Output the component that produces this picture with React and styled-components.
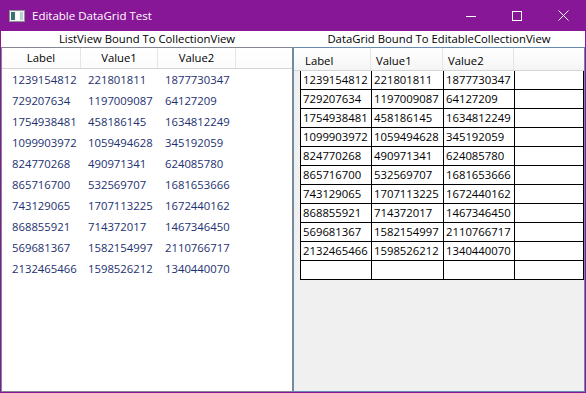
import React from "react";
import styled, { createGlobalStyle } from "styled-components";

const GlobalStyle = createGlobalStyle`
  html, body {
    margin: 0;
    padding: 0;
    background: #ffffff;
  }
  * {
    box-sizing: border-box;
  }
`;

const rows = [
  ["1239154812", "221801811", "1877730347"],
  ["729207634", "1197009087", "64127209"],
  ["1754938481", "458186145", "1634812249"],
  ["1099903972", "1059494628", "345192059"],
  ["824770268", "490971341", "624085780"],
  ["865716700", "532569707", "1681653666"],
  ["743129065", "1707113225", "1672440162"],
  ["868855921", "714372017", "1467346450"],
  ["569681367", "1582154997", "2110766717"],
  ["2132465466", "1598526212", "1340440070"]
];

const columns = ["Label", "Value1", "Value2"];

const Window = styled.div`
  width: 586px;
  height: 393px;
  background: #881798;
  display: flex;
  flex-direction: column;
  font-family: "Open Sans", "Noto Sans", sans-serif;
  font-size: 11.3px;
  color: #000;
`;

const TitleBar = styled.div`
  height: 31px;
  flex: none;
  display: flex;
  align-items: center;
  color: #ffffff;
`;

const AppIcon = styled.svg`
  margin-left: 9px;
  margin-right: 7px;
`;

const Title = styled.div`
  font-size: 11.5px;
  flex: 1;
  padding-bottom: 1px;
`;

const CaptionButton = styled.div`
  width: 46px;
  height: 31px;
  display: flex;
  align-items: center;
  justify-content: center;
`;

const Body = styled.div`
  flex: 1;
  margin: 0 1px 1px 1px;
  background: #ffffff;
  display: grid;
  grid-template-columns: 292px 292px;
`;

const Pane = styled.div`
  display: flex;
  flex-direction: column;
  min-height: 0;
`;

const Caption = styled.div`
  height: 16px;
  line-height: 16px;
  text-align: center;
  flex: none;
`;

const ListBox = styled.div`
  flex: 1;
  border: 1px solid #828790;
  background: #ffffff;
`;

const ListHeader = styled.div`
  display: grid;
  grid-template-columns: 79px 77px 78px 1fr;
  height: 21px;
  border-bottom: 1px solid #d5d5d5;
  background: linear-gradient(#ffffff, #fbfbfb);
`;

const ListHeaderCell = styled.div`
  border-right: ${(p) => (p.$filler ? "none" : "1px solid #e5e5e5")};
  display: flex;
  align-items: center;
  justify-content: center;
  padding-bottom: 1px;
`;

const ListRow = styled.div`
  display: grid;
  grid-template-columns: 79px 77px 78px 1fr;
  height: 21px;
  align-items: center;
  color: #1d3070;
`;

const ListCell = styled.div`
  padding-left: 7px;
  &:first-child {
    padding-left: 10px;
  }
`;

const Grid = styled.div`
  flex: 1;
  border: 1px solid #688caf;
  background: #f0f0f0;
`;

const GridHeader = styled.div`
  display: grid;
  grid-template-columns: 6px 71px 72px 71px 1fr;
  height: 23px;
  border-bottom: 1px solid #d5d5d5;
  background: linear-gradient(#ffffff, #f5f5f5);
`;

const GridHeaderCell = styled.div`
  border-right: ${(p) => (p.$plain ? "none" : "1px solid #e5e5e5")};
  padding-left: 5px;
  display: flex;
  align-items: center;
  padding-top: 2px;
`;

const GridRow = styled.div`
  display: grid;
  grid-template-columns: 6px 1px 71px 72px 71px 1fr;
  height: 19px;
`;

const RowHeader = styled.div`
  background: #f0f0f0;
`;

const RowLead = styled.div`
  background: #000;
`;

const GridCell = styled.div`
  background: #ffffff;
  border-right: 1px solid #000;
  border-bottom: 1px solid #000;
  padding-left: 2px;
  line-height: 18px;
  white-space: nowrap;
  overflow: hidden;
`;

function TitleIcon() {
  return (
    <AppIcon width="16" height="12" viewBox="0 0 16 12">
      <rect x="0.5" y="0.5" width="15" height="11" fill="#f4f6f6" stroke="#8e9698" />
      <rect x="2" y="2" width="4" height="8" fill="#3d6f73" />
      <rect x="7" y="2" width="3" height="8" fill="#ffffff" />
      <rect x="11" y="2" width="3" height="8" fill="#b9cfd4" />
    </AppIcon>
  );
}

export default function App() {
  return (
    <Window>
      <GlobalStyle />
      <TitleBar>
        <TitleIcon />
        <Title>Editable DataGrid Test</Title>
        <CaptionButton>
          <svg width="10" height="10" viewBox="0 0 10 10">
            <path d="M0 5.5h10" stroke="#fff" strokeWidth="1" />
          </svg>
        </CaptionButton>
        <CaptionButton>
          <svg width="10" height="10" viewBox="0 0 10 10">
            <rect x="0.5" y="0.5" width="9" height="9" fill="none" stroke="#fff" strokeWidth="1" />
          </svg>
        </CaptionButton>
        <CaptionButton>
          <svg width="11" height="11" viewBox="0 0 11 11">
            <path d="M0.5 0.5L10.5 10.5M10.5 0.5L0.5 10.5" stroke="#fff" strokeWidth="1" />
          </svg>
        </CaptionButton>
      </TitleBar>
      <Body>
        <Pane>
          <Caption>ListView Bound To CollectionView</Caption>
          <ListBox>
            <ListHeader>
              {columns.map((c) => (
                <ListHeaderCell key={c}>{c}</ListHeaderCell>
              ))}
              <ListHeaderCell $filler />
            </ListHeader>
            {rows.map((r) => (
              <ListRow key={r[0]}>
                {r.map((v, i) => (
                  <ListCell key={i}>{v}</ListCell>
                ))}
              </ListRow>
            ))}
          </ListBox>
        </Pane>
        <Pane>
          <Caption>DataGrid Bound To EditableCollectionView</Caption>
          <Grid>
            <GridHeader>
              <GridHeaderCell $plain />
              {columns.map((c) => (
                <GridHeaderCell key={c}>{c}</GridHeaderCell>
              ))}
              <GridHeaderCell $plain />
            </GridHeader>
            {[...rows, ["", "", ""]].map((r, idx) => (
              <GridRow key={idx}>
                <RowHeader />
                <RowLead />
                {r.map((v, i) => (
                  <GridCell key={i}>{v}</GridCell>
                ))}
                <GridCell />
              </GridRow>
            ))}
          </Grid>
        </Pane>
      </Body>
    </Window>
  );
}
